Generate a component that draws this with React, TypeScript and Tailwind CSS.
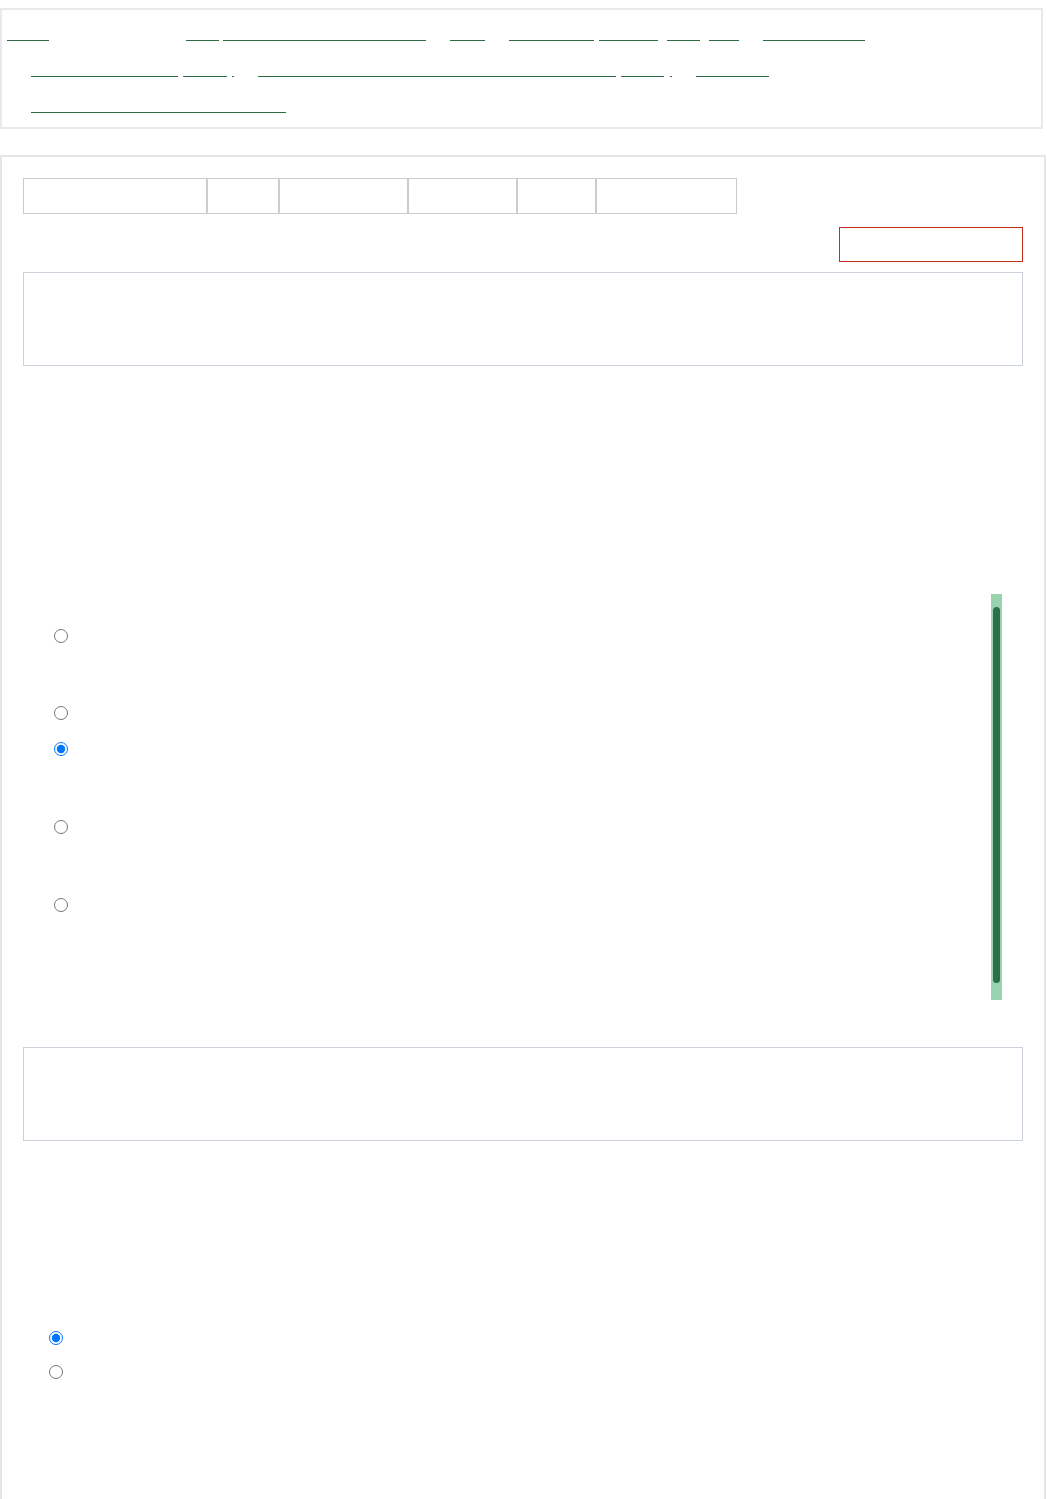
import React from 'react';

type NavLink = { label: string; w: string; ml: string };

const rowOne: NavLink[] = [
  { label: 'Home', w: 'w-[42px]', ml: 'ml-[5px]' },
  { label: 'News', w: 'w-[33px]', ml: 'ml-[137px]' },
  { label: 'Community discussions', w: 'w-[203px]', ml: 'ml-[4px]' },
  { label: 'Help', w: 'w-[35px]', ml: 'ml-[24px]' },
  { label: 'Resources', w: 'w-[85px]', ml: 'ml-[24px]' },
  { label: 'Guides', w: 'w-[59px]', ml: 'ml-[5px]' },
  { label: 'FAQ', w: 'w-[33px]', ml: 'ml-[9px]' },
  { label: 'Tips', w: 'w-[30px]', ml: 'ml-[9px]' },
  { label: 'Contact us', w: 'w-[102px]', ml: 'ml-[24px]' },
];

const rowTwo: NavLink[] = [
  { label: 'Account settings', w: 'w-[147px]', ml: 'ml-[29px]' },
  { label: 'Profile', w: 'w-[44px]', ml: 'ml-[5px]' },
  { label: '·', w: 'w-[2px]', ml: 'ml-[5px]' },
  { label: 'Notifications and privacy preferences', w: 'w-[358px]', ml: 'ml-[24px]' },
  { label: 'Security', w: 'w-[43px]', ml: 'ml-[5px]' },
  { label: '·', w: 'w-[2px]', ml: 'ml-[6px]' },
  { label: 'Sign out', w: 'w-[73px]', ml: 'ml-[24px]' },
];

const tabs = [
  { label: 'Overview', w: 'w-[184px]' },
  { label: 'Poll', w: 'w-[72px]' },
  { label: 'Results', w: 'w-[129px]' },
  { label: 'Comments', w: 'w-[109px]' },
  { label: 'Share', w: 'w-[79px]' },
  { label: 'History', w: 'w-[141px]' },
];

const options = [
  { label: 'First option with a longer description', h: 'h-[77px]', checked: false },
  { label: 'Second option', h: 'h-[36px]', checked: false },
  { label: 'Third option with a longer description', h: 'h-[78px]', checked: true },
  { label: 'Fourth option with a longer description', h: 'h-[78px]', checked: false },
  { label: 'Fifth option with a longer description', h: 'h-[101px]', checked: false },
];

function LinkRow({ links, h }: { links: NavLink[]; h: string }) {
  return (
    <div className={`flex items-start ${h}`}>
      {links.map((l, i) => (
        <a
          key={i}
          href="#"
          className={`block h-[19px] shrink-0 whitespace-nowrap border-b border-[#2e6b45] text-[6px] leading-[18px] text-transparent ${l.w} ${l.ml}`}
        >
          {l.label}
        </a>
      ))}
    </div>
  );
}

export default function App() {
  return (
    <div className="min-h-[1499px] bg-white font-['Liberation_Sans',Arial,sans-serif] text-transparent">
      <div className="h-[8px]" />
      <nav className="h-[121px] w-[1043px] border-2 border-[#e7eaed] pt-[12px]">
        <LinkRow links={rowOne} h="h-[36px]" />
        <LinkRow links={rowTwo} h="h-[36px]" />
        <LinkRow links={[{ label: 'Terms and conditions of use', w: 'w-[255px]', ml: 'ml-[29px]' }]} h="h-[19px]" />
      </nav>

      <main className="mt-[26px] h-[1400px] w-[1046px] border-2 border-[#e6e6e6] px-[21px] pt-[21px]">
        <div className="flex h-[36px]">
          {tabs.map((t) => (
            <button key={t.label} type="button" className={`h-[36px] border border-[#cccccc] text-[14px] text-transparent ${t.w}`}>
              {t.label}
            </button>
          ))}
        </div>

        <div className="mt-[13px] flex justify-end">
          <button type="button" className="h-[35px] w-[184px] border border-[#c42d1c] text-[14px] text-transparent">
            Report a problem
          </button>
        </div>

        <div className="mt-[10px] h-[94px] border border-[#cbd2dc] p-4 text-[14px]">Poll question details</div>

        <div className="mr-[21px] mt-[228px] flex h-[406px]">
          <div className="flex-1 pl-[31px] pt-[35px]">
            {options.map((o, i) => (
              <label key={i} className={`flex items-start gap-3 text-[14px] ${o.h}`}>
                <input type="radio" name="poll" defaultChecked={o.checked} className="h-[14px] w-[14px] shrink-0" />
                <span className="leading-[14px]">{o.label}</span>
              </label>
            ))}
          </div>
          <div className="w-[11px] bg-[#97d3af] px-[2px] pb-[17px] pt-[13px]">
            <div className="h-full rounded-full bg-[#2f6e4a]" />
          </div>
        </div>

        <div className="mt-[47px] h-[94px] border border-[#cbd2dc] p-4 text-[14px]">Additional notes</div>

        <div className="mt-[190px] pl-[26px]">
          <label className="flex h-[34px] items-start gap-3 text-[14px]">
            <input type="radio" name="vis" defaultChecked className="h-[14px] w-[14px] shrink-0" />
            <span className="leading-[14px]">Public</span>
          </label>
          <label className="flex h-[34px] items-start gap-3 text-[14px]">
            <input type="radio" name="vis" className="h-[14px] w-[14px] shrink-0" />
            <span className="leading-[14px]">Private</span>
          </label>
        </div>
      </main>
    </div>
  );
}
